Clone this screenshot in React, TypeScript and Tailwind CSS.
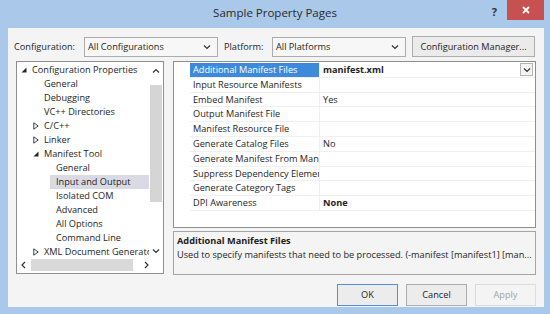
import React from 'react';

type TreeItem = { label: string; level: number; icon?: 'open' | 'closed'; selected?: boolean };

const tree: TreeItem[] = [
  { label: 'Configuration Properties', level: 0, icon: 'open' },
  { label: 'General', level: 1 },
  { label: 'Debugging', level: 1 },
  { label: 'VC++ Directories', level: 1 },
  { label: 'C/C++', level: 1, icon: 'closed' },
  { label: 'Linker', level: 1, icon: 'closed' },
  { label: 'Manifest Tool', level: 1, icon: 'open' },
  { label: 'General', level: 2 },
  { label: 'Input and Output', level: 2, selected: true },
  { label: 'Isolated COM', level: 2 },
  { label: 'Advanced', level: 2 },
  { label: 'All Options', level: 2 },
  { label: 'Command Line', level: 2 },
  { label: 'XML Document Generator', level: 1, icon: 'closed' },
];

const props: { name: string; value?: string; bold?: boolean }[] = [
  { name: 'Additional Manifest Files', value: 'manifest.xml', bold: true },
  { name: 'Input Resource Manifests' },
  { name: 'Embed Manifest', value: 'Yes' },
  { name: 'Output Manifest File' },
  { name: 'Manifest Resource File' },
  { name: 'Generate Catalog Files', value: 'No' },
  { name: 'Generate Manifest From ManagedAssembly' },
  { name: 'Suppress Dependency Element' },
  { name: 'Generate Category Tags' },
  { name: 'DPI Awareness', value: 'None', bold: true },
];

const indents = ['pl-[3px]', 'pl-[15px]', 'pl-[27px]'];

const Chevron = ({ dir = 'down' }: { dir?: 'down' | 'up' | 'left' | 'right' }) => {
  const d = {
    down: 'M1 2.5 L4 5.5 L7 2.5',
    up: 'M1 5.5 L4 2.5 L7 5.5',
    left: 'M5 1 L2 4 L5 7',
    right: 'M3 1 L6 4 L3 7',
  }[dir];
  return (
    <svg width="8" height="8" viewBox="0 0 8 8" className="block">
      <path d={d} fill="none" stroke="#333" strokeWidth="1.2" />
    </svg>
  );
};

const Triangle = ({ open }: { open: boolean }) =>
  open ? (
    <svg width="6" height="6" viewBox="0 0 6 6" className="block">
      <polygon points="5.5,0.5 5.5,5.5 0.5,5.5" fill="#262626" />
    </svg>
  ) : (
    <svg width="6" height="8" viewBox="0 0 6 8" className="block">
      <polygon points="0.8,0.8 5.2,4 0.8,7.2" fill="none" stroke="#404040" strokeWidth="1" />
    </svg>
  );

const Combo = ({ text, width }: { text: string; width: string }) => (
  <div className={`${width} shrink-0 h-[20px] flex items-center justify-between pl-[3px] pr-[6px] bg-[#f7f7f7] border border-[#acacac]`}>
    <span>{text}</span>
    <Chevron />
  </div>
);

export default function App() {
  return (
    <div className="w-[550px] h-[314px] bg-[#a9c8ea] flex flex-col text-[9.2px] text-[#1e1e1e] font-['Open_Sans',sans-serif] overflow-hidden">
      {/* Title bar */}
      <div className="relative h-[28px] flex items-center justify-center">
        <span className="text-[11.5px] text-[#2a2a2a] -mt-[2px]">Sample Property Pages</span>
        <div className="absolute right-[6px] top-0 flex items-start">
          <span className="text-[11px] font-bold text-[#333] mt-[4px] mr-[10px]">?</span>
          <div className="w-[37px] h-[20px] bg-[#c75050] flex items-center justify-center">
            <svg width="8" height="8" viewBox="0 0 8 8">
              <path d="M1 1 L7 7 M7 1 L1 7" stroke="#fff" strokeWidth="1.8" />
            </svg>
          </div>
        </div>
      </div>

      {/* Dialog body */}
      <div className="flex-1 min-w-0 ml-[8px] mr-[6px] mb-[7px] bg-[#f4f4f4] flex flex-col">
        {/* Configuration row */}
        <div className="flex items-center h-[21px] mt-[8px] pl-[6px]">
          <span className="w-[70px] shrink-0">Configuration:</span>
          <Combo text="All Configurations" width="w-[134px]" />
          <span className="ml-[6px] w-[48px] shrink-0">Platform:</span>
          <Combo text="All Platforms" width="w-[134px]" />
          <div className="ml-[6px] w-[123px] shrink-0 h-[21px] flex items-center justify-center bg-[#ebebeb] border border-[#acacac]">
            Configuration Manager...
          </div>
        </div>

        {/* Main area */}
        <div className="flex mt-[4px] pl-[8px] pr-[8px] gap-[9px]">
          {/* Tree */}
          <div className="w-[148px] shrink-0 h-[213px] bg-white border border-[#8f8f8f] flex flex-col">
            <div className="flex h-[196px]">
              <div className="flex-1 min-w-0 overflow-hidden pt-[1px]">
                {tree.map((t, i) => (
                  <div key={i} className={`flex items-center h-[14px] whitespace-nowrap ${indents[t.level]}`}>
                    <div className="w-[6px] shrink-0 flex justify-end">
                      <div className="-mr-[1px]">{t.icon && <Triangle open={t.icon === 'open'} />}</div>
                    </div>
                    <div className={`flex-1 h-full flex items-center pl-[6px] ${t.selected ? 'bg-[#dadae4]' : ''}`}>
                      {t.label}
                    </div>
                  </div>
                ))}
              </div>
              <div className="w-[14px] shrink-0 flex flex-col items-center">
                <div className="h-[18px] flex items-center">
                  <Chevron dir="up" />
                </div>
                <div className="w-[12px] h-[117px] mt-[5px] bg-[#d5d5d5]" />
                <div className="flex-1" />
                <div className="h-[14px] flex items-center">
                  <Chevron dir="down" />
                </div>
              </div>
            </div>
            <div className="flex h-[14px] items-center">
              <div className="flex-1 flex items-center pl-[3px]">
                <Chevron dir="left" />
                <div className="w-[102px] h-[12px] ml-[3px] bg-[#d9d9d9]" />
                <div className="ml-[9px]">
                  <Chevron dir="right" />
                </div>
              </div>
              <div className="w-[14px]" />
            </div>
          </div>

          {/* Right column */}
          <div className="flex-1 min-w-0 flex flex-col gap-[3px]">
            <div className="h-[167px] bg-white border border-[#8f8f8f] pt-[1px] pl-[16px]">
              {props.map((p, i) => (
                <div key={i} className="flex h-[14.8px] border-b border-[#f0f0f0]">
                  <div
                    className={`w-[130px] shrink-0 flex items-center pl-[3px] whitespace-nowrap overflow-hidden border-r border-[#f0f0f0] ${
                      i === 0 ? 'bg-[#3c8ad9] text-white' : ''
                    }`}
                  >
                    {p.name}
                  </div>
                  <div className={`flex-1 min-w-0 flex items-center justify-between pl-[3px] ${p.bold ? 'font-bold' : ''}`}>
                    <span>{p.value}</span>
                    {i === 0 && (
                      <div className="w-[13px] h-[13px] mr-[2px] border border-[#b5b5b5] bg-[#f4f4f4] flex items-center justify-center">
                        <Chevron />
                      </div>
                    )}
                  </div>
                </div>
              ))}
            </div>
            <div className="h-[44px] border border-[#a5a5a5] bg-[#f4f4f4] pl-[3px] pt-[2px] overflow-hidden">
              <div className="font-bold leading-[14px]">Additional Manifest Files</div>
              <div className="leading-[14px] whitespace-nowrap">
                Used to specify manifests that need to be processed. (-manifest [manifest1] [man...
              </div>
            </div>
          </div>
        </div>

        {/* Buttons */}
        <div className="flex justify-end gap-[8px] pr-[8px] mt-[9px]">
          <div className="w-[61px] h-[22px] flex items-center justify-center bg-[#ececec] border border-[#4d90dd]">OK</div>
          <div className="w-[61px] h-[22px] flex items-center justify-center bg-[#ececec] border border-[#acacac]">Cancel</div>
          <div className="w-[61px] h-[22px] flex items-center justify-center bg-[#f4f4f4] border border-[#dcdcdc] text-[#a3a3a3]">
            Apply
          </div>
        </div>
      </div>
    </div>
  );
}
